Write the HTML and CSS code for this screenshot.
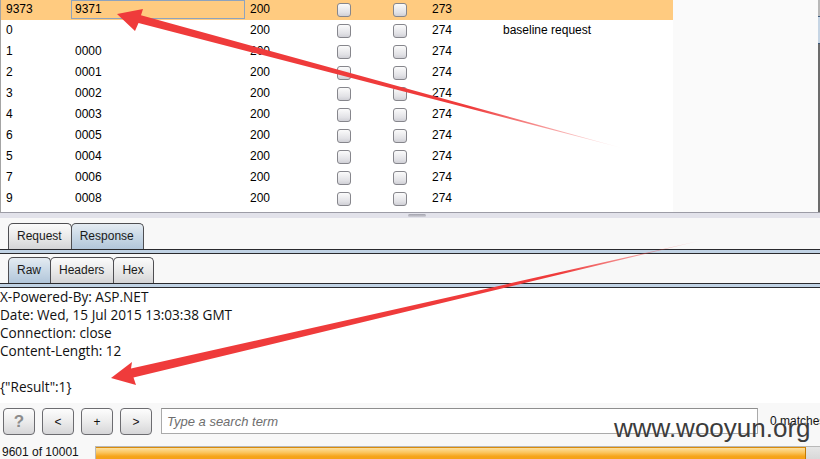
FILE: index.html
```html
<!DOCTYPE html>
<html>
<head>
<meta charset="utf-8">
<link rel="stylesheet" href="styles.css">
</head>
<body>
<div class="app">
  <section class="results">
    <div class="table">
      <div class="row sel"><span class="c">9373</span><span class="c focus">9371</span><span class="c">200</span><span class="c ck"><i class="cb"></i></span><span class="c ck"><i class="cb"></i></span><span class="c n">273</span><span class="c n"></span></div>
      <div class="row"><span class="c">0</span><span class="c"></span><span class="c">200</span><span class="c ck"><i class="cb"></i></span><span class="c ck"><i class="cb"></i></span><span class="c n">274</span><span class="c n">baseline request</span></div>
      <div class="row"><span class="c">1</span><span class="c">0000</span><span class="c">200</span><span class="c ck"><i class="cb"></i></span><span class="c ck"><i class="cb"></i></span><span class="c n">274</span><span class="c n"></span></div>
      <div class="row"><span class="c">2</span><span class="c">0001</span><span class="c">200</span><span class="c ck"><i class="cb"></i></span><span class="c ck"><i class="cb"></i></span><span class="c n">274</span><span class="c n"></span></div>
      <div class="row"><span class="c">3</span><span class="c">0002</span><span class="c">200</span><span class="c ck"><i class="cb"></i></span><span class="c ck"><i class="cb"></i></span><span class="c n">274</span><span class="c n"></span></div>
      <div class="row"><span class="c">4</span><span class="c">0003</span><span class="c">200</span><span class="c ck"><i class="cb"></i></span><span class="c ck"><i class="cb"></i></span><span class="c n">274</span><span class="c n"></span></div>
      <div class="row"><span class="c">6</span><span class="c">0005</span><span class="c">200</span><span class="c ck"><i class="cb"></i></span><span class="c ck"><i class="cb"></i></span><span class="c n">274</span><span class="c n"></span></div>
      <div class="row"><span class="c">5</span><span class="c">0004</span><span class="c">200</span><span class="c ck"><i class="cb"></i></span><span class="c ck"><i class="cb"></i></span><span class="c n">274</span><span class="c n"></span></div>
      <div class="row"><span class="c">7</span><span class="c">0006</span><span class="c">200</span><span class="c ck"><i class="cb"></i></span><span class="c ck"><i class="cb"></i></span><span class="c n">274</span><span class="c n"></span></div>
      <div class="row"><span class="c">9</span><span class="c">0008</span><span class="c">200</span><span class="c ck"><i class="cb"></i></span><span class="c ck"><i class="cb"></i></span><span class="c n">274</span><span class="c n"></span></div>
    </div>
    <div class="rest"></div>
    <div class="vscroll"></div>
  </section>

  <div class="splitter"><div class="band"><span class="grip"></span></div></div>

  <div class="tabbar">
    <span class="tab">Request</span><span class="tab on">Response</span>
  </div>
  <div class="edge"></div>

  <div class="tabbar inner">
    <span class="tab on">Raw</span><span class="tab">Headers</span><span class="tab">Hex</span>
  </div>
  <div class="edge"></div>

  <pre class="raw">X-Powered-By: ASP.NET
Date: Wed, 15 Jul 2015 13:03:38 GMT
Connection: close
Content-Length: 12

{"Result":1}</pre>

  <div class="search">
    <button class="btn help">?</button>
    <button class="btn">&lt;</button>
    <button class="btn">+</button>
    <button class="btn">&gt;</button>
    <input class="term" type="text" placeholder="Type a search term">
    <span class="matches">0 matches</span>
  </div>

  <div class="status">
    <span class="count">9601 of 10001</span>
    <div class="track"><div class="fill" style="width:96%"></div></div>
  </div>

  <div class="watermark">www.wooyun.org</div>

  <svg class="arrows" width="820" height="459" viewBox="0 0 820 459">
    <defs>
      <linearGradient id="g1" gradientUnits="userSpaceOnUse" x1="622" y1="148" x2="470" y2="107">
        <stop offset="0" stop-color="#ef3b3b" stop-opacity="0.05"/>
        <stop offset="1" stop-color="#ef3b3b" stop-opacity="1"/>
      </linearGradient>
      <linearGradient id="g2" gradientUnits="userSpaceOnUse" x1="703" y1="240" x2="560" y2="273">
        <stop offset="0" stop-color="#ef3b3b" stop-opacity="0.05"/>
        <stop offset="1" stop-color="#ef3b3b" stop-opacity="1"/>
      </linearGradient>
    </defs>
    <polygon fill="url(#g1)" points="117,14 143,9 141,15.3 622,148 138.5,23 135,31"/>
    <polygon fill="url(#g2)" points="111,378 132,362 131,368.6 703,240 133.5,377.5 136,385"/>
  </svg>
</div>
</body>
</html>
```

FILE: styles.css
```css
html, body {
  margin: 0;
  padding: 0;
}
body {
  width: 820px;
  height: 459px;
  overflow: hidden;
  background: #f8f8f8;
  font-family: "Liberation Sans", Arial, sans-serif;
  font-size: 12px;
  color: #111;
}
.app {
  position: relative;
  width: 820px;
  height: 459px;
  overflow: hidden;
  display: flex;
  flex-direction: column;
}

/* results table */
.results {
  display: flex;
  height: 212px;
  flex: none;
  border-bottom: 1px solid #9c9ca6;
  border-left: 1px solid #a4a4a4;
  overflow: hidden;
}
.table {
  width: 672px;
  flex: none;
  background: #fff;
  margin-top: -1px;
  padding-top: 1px;
}
.row {
  display: grid;
  grid-template-columns: 69px 175px 75px 56px 52px 71px 174px;
  height: 21px;
  line-height: 21px;
}
.row.sel {
  background: #ffcb80;
  margin-top: -1px;
}
.c {
  padding-left: 5px;
  white-space: nowrap;
  overflow: hidden;
  color: #000;
}
.c.n {
  padding-left: 4px;
}
.c.ck {
  padding-left: 17px;
  display: flex;
  align-items: center;
}
.c.focus {
  margin: 1px 0 1px 1px;
  border: 1px solid #8ea3be;
  padding-left: 3px;
  line-height: 17px;
}
.cb {
  display: block;
  width: 14px;
  height: 14px;
  box-sizing: border-box;
  border: 1px solid #86868c;
  border-radius: 3px;
  background: linear-gradient(#fbfbfb, #e2e2e6 70%, #d0d0d6);
}
.rest {
  flex: 1;
  background: #fafafa;
}
.vscroll {
  width: 2px;
  flex: none;
  background: linear-gradient(#b8b8b8 0, #b8b8b8 16px, #3e5a7a 16px, #3e5a7a 17px, #c6d5e4 17px, #c6d5e4 43px, #3e5a7a 43px, #3e5a7a 44px, #6c6c6c 44px);
}

/* splitter */
.splitter {
  height: 10px;
  flex: none;
}
.band {
  height: 5px;
  background: #e2e2ea;
  display: flex;
  align-items: center;
}
.grip {
  margin-left: 408px;
  width: 18px;
  height: 3px;
  border-radius: 2px;
  background: linear-gradient(#a2a2ac, #d0d0d8);
}

/* tabs */
.tabbar {
  display: flex;
  height: 26px;
  flex: none;
  padding-left: 8px;
}
.tabbar.inner {
  margin-top: 3px;
}
.tab {
  box-sizing: border-box;
  height: 26px;
  line-height: 25px;
  padding: 0 9px 0 8px;
  border: 1px solid #4e4e52;
  border-bottom: 0;
  border-radius: 5px 5px 0 0;
  background: linear-gradient(#fbfbfb, #e6e6e6 60%, #d4d4d6);
  color: #1a1a1a;
  white-space: nowrap;
}
.tab.wide {
  padding-right: 11px;
}
.tab + .tab {
  margin-left: -1px;
}
.tab.on {
  background: linear-gradient(#e4ebf2, #c9d8e6 50%, #b2c6da);
}
.edge {
  flex: none;
  height: 3px;
  border-top: 1px solid #2a2a2e;
  border-bottom: 1px solid #2a2a2e;
  background: #c0d2e4;
}

/* raw message */
.raw {
  flex: none;
  margin: 0;
  height: 115px;
  background: #fff;
  font-family: "Open Sans", "Liberation Sans", sans-serif;
  font-size: 13.6px;
  line-height: 18px;
  color: #111;
  white-space: pre;
  overflow: hidden;
}

/* search */
.search {
  flex: none;
  height: 43px;
  box-sizing: border-box;
  padding: 5px 0 0 3px;
  display: flex;
  align-items: flex-start;
  gap: 7px;
  white-space: nowrap;
  overflow: hidden;
}
.btn {
  flex: none;
  width: 32px;
  height: 27px;
  box-sizing: border-box;
  border: 1px solid #6c6c70;
  border-radius: 4px;
  background: linear-gradient(#fdfdfd, #ececec 50%, #d6d6d8);
  font-family: "Liberation Sans", Arial, sans-serif;
  font-size: 12px;
  color: #111;
  padding: 0;
  display: flex;
  align-items: center;
  justify-content: center;
}
.btn.help {
  font-size: 17px;
  font-weight: bold;
  color: #8c8c8c;
}
.term {
  flex: none;
  margin: 0 0 0 2px;
  width: 597px;
  height: 26px;
  box-sizing: border-box;
  border: 1px solid #aaaaaa;
  border-top-color: #8e8e8e;
  background: #fff;
  padding: 0 0 0 5px;
  font-family: "Liberation Sans", Arial, sans-serif;
  font-size: 13px;
  font-style: italic;
  outline: none;
}
.term::placeholder {
  color: #6e6e6e;
  font-style: italic;
}
.matches {
  margin-left: 5px;
  line-height: 26px;
  color: #111;
}

/* status */
.status {
  flex: none;
  display: flex;
  align-items: flex-start;
  height: 20px;
}
.count {
  width: 95px;
  flex: none;
  box-sizing: border-box;
  padding-left: 2px;
  line-height: 12px;
  color: #111;
  white-space: nowrap;
}
.track {
  flex: none;
  width: 742px;
  height: 18px;
  box-sizing: border-box;
  border: 1px solid #b9b9b9;
  background: linear-gradient(#e6e6e6, #d4d4d4);
}
.fill {
  height: 100%;
  box-sizing: border-box;
  border-right: 1px solid #c47a00;
  border-top: 1px solid #d98b0b;
  background: linear-gradient(#fde0a0, #fbc55e 30%, #f6a51c 55%, #f39a10);
}

/* overlays */
.watermark {
  position: absolute;
  left: 614px;
  top: 415px;
  font-family: "Liberation Sans", Arial, sans-serif;
  font-size: 26px;
  line-height: 26px;
  color: #3c3c3c;
  white-space: nowrap;
  text-shadow: 0 0 1px rgba(255, 255, 255, 0.6);
}
.arrows {
  position: absolute;
  left: 0;
  top: 0;
  pointer-events: none;
}
```
